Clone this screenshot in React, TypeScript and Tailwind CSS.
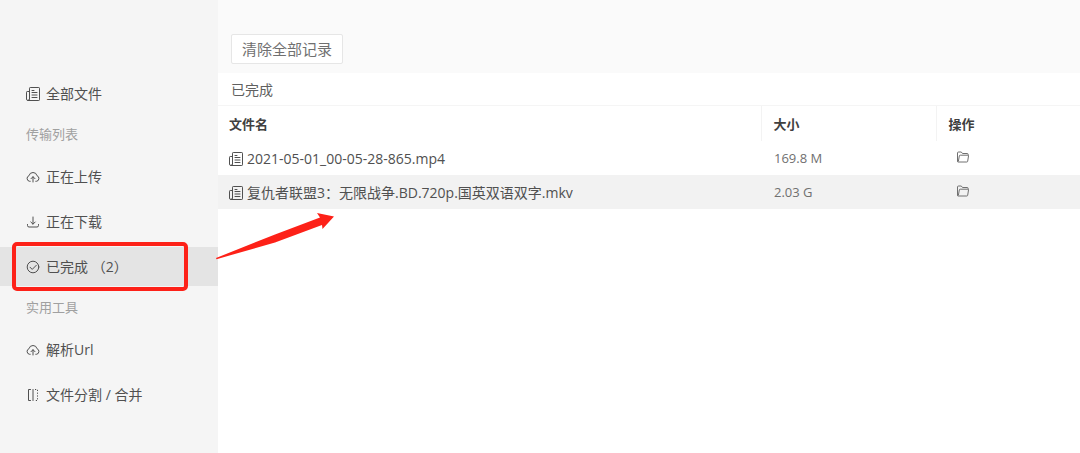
import type { ReactNode } from "react";

type IconProps = { className?: string };

function Svg({ className = "size-[14px]", children }: IconProps & { children: ReactNode }) {
  return (
    <svg
      className={`${className} shrink-0`}
      viewBox="0 0 14 14"
      fill="none"
      stroke="currentColor"
      strokeWidth="1"
      strokeLinecap="round"
      strokeLinejoin="round"
      aria-hidden="true"
    >
      {children}
    </svg>
  );
}

function DocumentIcon() {
  return (
    <Svg>
      <path d="M3.500 12.200V1.200q0-.7.7-.7h8.600q.7 0 .7.7v11.600q0 .7-.7.7H2q-1.500 0-1.500-1.500V5.200q0-.7.7-.7h2.300M3.500 12q0 1.500-1.500 1.500" />
      <path d="M6 3.500h2M6 5.500h5M6 8h5M6 10.500h5" />
    </Svg>
  );
}

function CloudUploadIcon() {
  return (
    <Svg>
      <path d="M4.200 11.300H3.600a2.900 2.900 0 0 1-.6-5.600 4.100 4.100 0 0 1 8 0 2.900 2.900 0 0 1-.6 5.600h-.6" />
      <path d="M7 12V6.800M5 8.700l2-2 2 2" />
    </Svg>
  );
}

function DownloadIcon() {
  return (
    <Svg>
      <path d="M7 2v7M4.800 7L7 9.200 9.200 7M1.500 9.500v1q0 1.500 1.500 1.500h8q1.500 0 1.500-1.500v-1" />
    </Svg>
  );
}

function CheckIcon() {
  return (
    <Svg>
      <circle cx="7" cy="7" r="5.800" />
      <path d="M4 7.200l2.200 2.200L10.300 5.300" />
    </Svg>
  );
}

function SplitIcon() {
  return (
    <Svg>
      <path d="M4.500 1.500h-2v11h2M7 1.500v11" />
      <path d="M9 1.500h2.500v11H9" strokeDasharray="1.200 1.600" strokeLinecap="butt" />
    </Svg>
  );
}

function FolderIcon() {
  return (
    <Svg>
      <path d="M1.500 11V3q0-1 1-1h2.800l1.200 1.500h4.700q1 0 1 1v.7" />
      <path d="M2.200 12h8.600q.8 0 .9-.8l.8-5.200q.1-.8-.7-.8H4.200q-.8 0-.9.800L2.400 11.200q-.2.800-.9.300" />
    </Svg>
  );
}

function NavItem({
  icon,
  label,
  active = false,
  children,
}: {
  icon: ReactNode;
  label: string;
  active?: boolean;
  children?: ReactNode;
}) {
  return (
    <li className="relative">
      <a
        href="#"
        aria-current={active ? "page" : undefined}
        className={`flex h-[39px] items-center gap-[6px] pl-[26px] text-sm whitespace-pre text-[#505050] ${active ? "bg-[#e4e4e4]" : ""}`}
      >
        {icon}
        {label}
      </a>
      {children}
    </li>
  );
}

function NavHeading({ children }: { children: ReactNode }) {
  return <li className="flex h-8 items-center pl-[26px] text-[13px] text-[#a0a0a0]">{children}</li>;
}

function Annotation() {
  return (
    <>
      <div className="pointer-events-none absolute -top-[5px] right-[30px] -bottom-[5px] left-3 z-10 rounded-[5px] border-4 border-[#fd2118]" />
      <svg
        className="pointer-events-none absolute -top-[35px] left-[215px] z-10 h-[48px] w-[120px]"
        viewBox="0 0 120 48"
        fill="#fd2118"
        aria-hidden="true"
      >
        <path d="M1 46L60 22.500 105 5.500 102 1 119 4.500 107.500 17 107 13 60 30.500 1.500 47.200Z" />
      </svg>
    </>
  );
}

const files = [
  { name: "2021-05-01_00-05-28-865.mp4", size: "169.8 M", selected: false },
  { name: "复仇者联盟3：无限战争.BD.720p.国英双语双字.mkv", size: "2.03 G", selected: true },
];

export default function App() {
  return (
    <div className="flex min-h-screen bg-white font-['Open_Sans','Noto_Sans_CJK_SC',sans-serif] text-[#505050]">
      <nav className="w-[218px] shrink-0 bg-[#f5f5f5] pt-[74px]">
        <ul className="flex flex-col gap-[6px]">
          <NavItem icon={<DocumentIcon />} label="全部文件" />
          <NavHeading>传输列表</NavHeading>
          <NavItem icon={<CloudUploadIcon />} label="正在上传" />
          <NavItem icon={<DownloadIcon />} label="正在下载" />
          <NavItem icon={<CheckIcon />} label="已完成 （2）" active>
            <Annotation />
          </NavItem>
          <NavHeading>实用工具</NavHeading>
          <NavItem icon={<CloudUploadIcon />} label="解析Url" />
          <NavItem icon={<SplitIcon />} label="文件分割 / 合并" />
        </ul>
      </nav>

      <main className="min-w-0 flex-1">
        <div className="bg-[#fafafa] px-[13px] pt-[34px] pb-[9px]">
          <button
            type="button"
            className="flex h-[30px] items-center rounded-[2px] border border-[#e6e6e6] bg-white px-[10px] text-[15px] text-[#707070]"
          >
            清除全部记录
          </button>
        </div>
        <h1 className="flex h-[33px] items-center border-b border-[#f5f5f5] px-[13px] pt-[2px] text-sm text-[#606060]">
          已完成
        </h1>
        <table className="w-full table-fixed border-collapse text-left">
          <colgroup>
            <col />
            <col className="w-[175px]" />
            <col className="w-[144px]" />
          </colgroup>
          <thead className="text-[13px] text-[#404040]">
            <tr className="h-[35px]">
              <th className="p-0 pt-[2px] pl-[11px] font-bold">文件名</th>
              <th className="border-l border-[#f3f3f3] p-0 pt-[2px] pl-3 font-bold">大小</th>
              <th className="border-l border-[#f3f3f3] p-0 pt-[2px] pl-3 font-bold">操作</th>
            </tr>
          </thead>
          <tbody>
            {files.map((file) => (
              <tr key={file.name} className={`h-[34px] ${file.selected ? "bg-[#f2f2f2]" : ""}`}>
                <td className="p-0 pt-[2px] pl-[11px] text-sm">
                  <div className="flex items-center gap-[4px]">
                    <DocumentIcon />
                    {file.name}
                  </div>
                </td>
                <td className="p-0 pt-[2px] pl-[13px] text-[13px] text-[#707070]">{file.size}</td>
                <td className="p-0 pl-5">
                  <button type="button" aria-label="打开文件夹" className="flex pb-[3px] text-[#707070]">
                    <FolderIcon />
                  </button>
                </td>
              </tr>
            ))}
          </tbody>
        </table>
      </main>
    </div>
  );
}
